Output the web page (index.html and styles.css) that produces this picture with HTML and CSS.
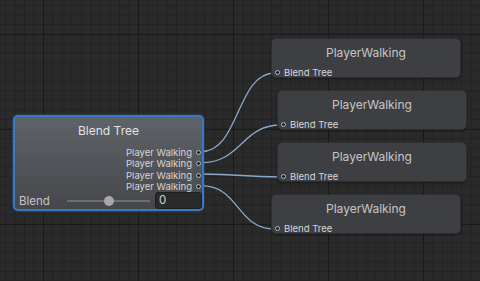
FILE: index.html
```html
<!DOCTYPE html>
<html lang="en">
<head>
    <meta charset="UTF-8">
    <title>Animator - Blend Tree</title>
    <link rel="stylesheet" href="styles.css">
</head>
<body>
    <div class="graph">
        <!-- wires between blend tree outputs and motions -->
        <svg class="wires" width="480" height="281" viewBox="0 0 480 281">
            <path d="M201,151.7 C240,151.7 236,73 275,73"/>
            <path d="M201,162.7 C242,162.7 241,125 281,125"/>
            <path d="M201,174 C242,174 241,177 281,177"/>
            <path d="M201,185.7 C240,185.7 236,229 275,229"/>
        </svg>

        <div class="node blend-tree">
            <div class="node-title">Blend Tree</div>
            <ul class="outputs">
                <li>Player Walking<span class="port"></span></li>
                <li>Player Walking<span class="port"></span></li>
                <li>Player Walking<span class="port"></span></li>
                <li>Player Walking<span class="port"></span></li>
            </ul>
            <div class="param-row">
                <span class="param-label">Blend</span>
                <div class="slider"><span class="thumb"></span></div>
                <div class="field">0</div>
            </div>
        </div>

        <div class="node motion motion-1">
            <div class="node-title">PlayerWalking</div>
            <div class="input"><span class="port"></span>Blend Tree</div>
        </div>
        <div class="node motion motion-2">
            <div class="node-title">PlayerWalking</div>
            <div class="input"><span class="port"></span>Blend Tree</div>
        </div>
        <div class="node motion motion-3">
            <div class="node-title">PlayerWalking</div>
            <div class="input"><span class="port"></span>Blend Tree</div>
        </div>
        <div class="node motion motion-4">
            <div class="node-title">PlayerWalking</div>
            <div class="input"><span class="port"></span>Blend Tree</div>
        </div>
    </div>
</body>
</html>
```

FILE: styles.css
```css
/* --- canvas --- */
:root {
    --font-family: Inter, "Noto Sans", "DejaVu Sans", sans-serif;
    --wire-color: #8aa8cc;
    --select-blue: #3a78c2;
}

body {
    margin: 0;
    font-family: var(--font-family);
    background: #282828;
}

.graph {
    position: relative;
    width: 480px;
    height: 281px;
    overflow: hidden;
    background-color: #2a2a2a;
    background-image:
        linear-gradient(to right, #1a1a1a 1px, transparent 1px),
        linear-gradient(to bottom, #1a1a1a 1px, transparent 1px),
        linear-gradient(to right, #232323 1px, transparent 1px),
        linear-gradient(to bottom, #232323 1px, transparent 1px);
    background-size: 95px 95px, 95px 95px, 9.5px 9.5px, 9.5px 9.5px;
    background-position: 43px 34px, 43px 34px, 5px 5px, 5px 5px;
}

.wires {
    position: absolute;
    left: 0;
    top: 0;
}
.wires path {
    fill: none;
    stroke: var(--wire-color);
    stroke-width: 1.3;
}

/* --- nodes --- */
.node {
    position: absolute;
    box-sizing: border-box;
    border-radius: 5px;
}

.node-title {
    text-align: center;
    font-size: 12px;
    line-height: 16px;
}

.port {
    display: inline-block;
    box-sizing: border-box;
    width: 5px;
    height: 5px;
    border: 1px solid #b9bec4;
    border-radius: 50%;
    background: #1c1c1c;
}

/* --- blend tree --- */
.blend-tree {
    left: 13px;
    top: 115px;
    width: 191px;
    height: 96px;
    border: 2px solid var(--select-blue);
    box-shadow: 0 0 2px rgba(58, 120, 194, 0.8);
    background: linear-gradient(#5f6267, #45474b);
}
.blend-tree .node-title {
    padding-top: 6px;
    color: #e4e4e4;
}

.outputs {
    list-style: none;
    margin: 8px 0 0;
    padding: 0 1px 0 0;
}
.outputs li {
    display: flex;
    justify-content: flex-end;
    align-items: center;
    gap: 4px;
    height: 11.3px;
    font-size: 9.5px;
    color: #d6d6d6;
}

.param-row {
    display: flex;
    align-items: center;
    height: 17px;
    padding: 0 0 0 4px;
}
.param-label {
    width: 48px;
    font-size: 11.5px;
    color: #c4c4c4;
}
.slider {
    position: relative;
    flex: 1;
    height: 2px;
    background: #6c6e72;
    margin-right: 5px;
}
.thumb {
    position: absolute;
    left: 37px;
    top: -4px;
    width: 10px;
    height: 10px;
    border-radius: 50%;
    background: #a8a8a8;
}
.field {
    box-sizing: border-box;
    width: 47px;
    height: 17px;
    padding-left: 3px;
    border: 1px solid #1e1e1e;
    border-radius: 3px;
    background: #2a2a2a;
    color: #d0d0d0;
    font-size: 11.5px;
    line-height: 15px;
}

/* --- motion nodes --- */
.motion {
    width: 190px;
    height: 40px;
    background: #3e3f43;
    border: 1px solid #2e2f32;
    box-shadow: 0 1px 2px rgba(0, 0, 0, 0.4);
}
.motion .node-title {
    padding-top: 6px;
    color: #c6c6c6;
}
.motion .input {
    display: flex;
    align-items: center;
    gap: 4px;
    margin-top: 6px;
    padding-left: 3px;
    font-size: 9.5px;
    line-height: 11px;
    color: #d6d6d6;
}

.motion-1 { left: 271px; top: 38px; }
.motion-2 { left: 277px; top: 90px; }
.motion-3 { left: 277px; top: 142px; }
.motion-4 { left: 271px; top: 194px; }
```
